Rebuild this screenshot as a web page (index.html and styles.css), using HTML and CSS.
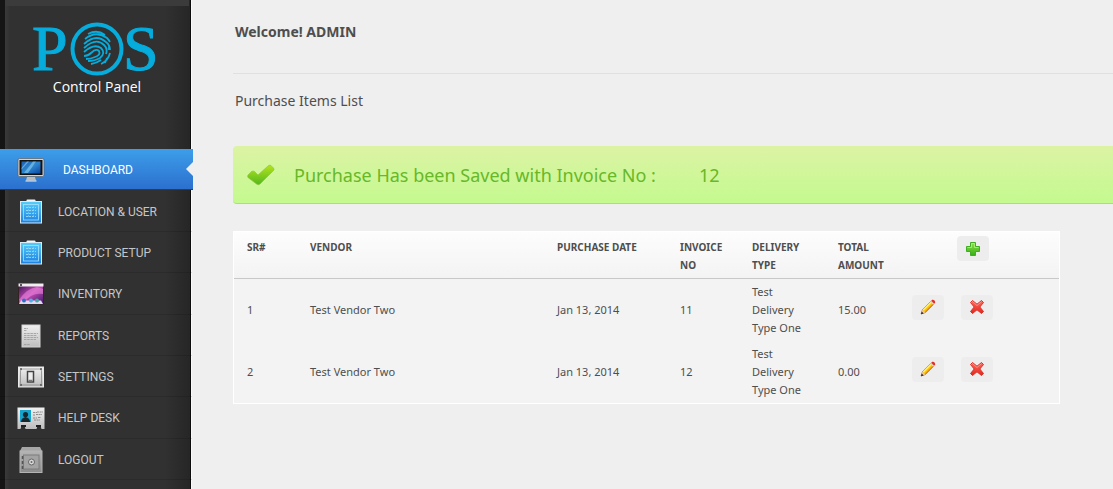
FILE: index.html
```html
<!DOCTYPE html>
<html lang="en">
<head>
<meta charset="utf-8">
<title>POS Control Panel</title>
<link rel="stylesheet" href="styles.css">
</head>
<body>
<svg class="defs" width="0" height="0" aria-hidden="true">
  <defs>
    <linearGradient id="blue" x1="0" y1="0" x2="0" y2="1"><stop offset="0" stop-color="#55cdfb"/><stop offset="1" stop-color="#1c7fe2"/></linearGradient>
    <linearGradient id="screen" x1="0" y1="0" x2="1" y2="1"><stop offset="0" stop-color="#1d5fb0"/><stop offset=".5" stop-color="#2f86d0"/><stop offset="1" stop-color="#0b46a4"/></linearGradient>
    <linearGradient id="metal" x1="0" y1="0" x2="0" y2="1"><stop offset="0" stop-color="#f1f1f1"/><stop offset="1" stop-color="#bdbdbd"/></linearGradient>
    <linearGradient id="safe" x1="0" y1="0" x2="0" y2="1"><stop offset="0" stop-color="#b5b5b5"/><stop offset="1" stop-color="#8b8b8b"/></linearGradient>
    <linearGradient id="space" x1="0" y1="0" x2="1" y2="1"><stop offset="0" stop-color="#35104f"/><stop offset=".5" stop-color="#c24bb5"/><stop offset="1" stop-color="#3b1769"/></linearGradient>
    <linearGradient id="leaf" x1="0" y1="0" x2="0" y2="1"><stop offset="0" stop-color="#b4e31e"/><stop offset="1" stop-color="#53b81c"/></linearGradient>
    <linearGradient id="red" x1="0" y1="0" x2="0" y2="1"><stop offset="0" stop-color="#ff6a5c"/><stop offset="1" stop-color="#e3261b"/></linearGradient>
    <linearGradient id="green" x1="0" y1="0" x2="0" y2="1"><stop offset="0" stop-color="#8fe04a"/><stop offset="1" stop-color="#35b014"/></linearGradient>
    <symbol id="i-plan" viewBox="0 0 28 26">
      <rect x="9.500" y=".5" width="9" height="3" rx="1" fill="#f4f4f4"/>
      <rect x="3.500" y="2.500" width="21" height="21.500" fill="url(#blue)" stroke="#d8eaf4"/>
      <rect x="6.500" y="5.500" width="15" height="15.500" fill="none" stroke="#a5e4ff" stroke-width=".8"/>
      <path d="M9 8.500h10M9 11.500h10M9 14.500h10M9 17.500h10" stroke="#a9e2fb" stroke-width=".8" stroke-dasharray="2 1"/>
      <path d="M11.500 7v12M16.500 7v12" stroke="#7fd0f6" stroke-width=".6" stroke-dasharray="2 1"/>
    </symbol>
    <symbol id="i-edit" viewBox="0 0 16 16">
      <path d="M1 15l1.500-4.500L11 2l3 3-8.500 8.500z" fill="#f9c80e" stroke="#a8741a" stroke-width=".7"/>
      <path d="M3.300 11L11 3.300" stroke="#fff07a" stroke-width="1.500"/><path d="M5.300 12.800l7.700-7.700" stroke="#e78a12" stroke-width="1.200"/>
      <path d="M1 15l1.400-4.200 2.900 2.800z" fill="#eec59a"/><path d="M1 15.200l.7-2.600 1.900 1.800z" fill="#3b1c10"/>
      <path d="M10.200 2.800l1-1 3 3-1 1z" fill="#d9d9e2"/><path d="M11.200 1.800l1-1q1.200-.5 2.300.6t.6 2.400l-.9 1z" fill="#ea2b24"/>
    </symbol>
    <symbol id="i-delete" viewBox="0 0 16 16">
      <path d="M1.500 3.500l2-2L8 5.200l4.500-3.700 2 2L10.800 8l3.700 4.500-2 2L8 10.800l-4.500 3.700-2-2L5.200 8z" fill="url(#red)" stroke="#d8302a" stroke-linejoin="round"/>
      <path d="M2.500 3.500l1-1L8 6.500l4.500-4" fill="none" stroke="#ff9a90" stroke-width=".9"/>
    </symbol>
    <symbol id="i-add" viewBox="0 0 16 16">
      <path d="M5.500 1.500h5v4h4v5h-4v4h-5v-4h-4v-5h4z" fill="url(#green)" stroke="#3fae22"/>
      <path d="M6.500 6.500v-4h3v4h4" fill="none" stroke="#b6f07c" stroke-width=".8"/><path d="M2.500 6.500h4" stroke="#b6f07c" stroke-width=".8"/>
    </symbol>
  </defs>
</svg>
<div class="app">
  <aside class="sidebar">
    <div class="brand">
      <svg class="logo" viewBox="0 0 132 56" role="img" aria-label="POS">
        <text class="logo-letter" x="1" y="49">P</text>
        <text class="logo-letter" x="92" y="49">S</text>
        <circle class="logo-ring" cx="66" cy="28" r="24.500"/>
        <g class="logo-print">
          <path d="M57 13q9-5 17 1M54 18q11-9 22-1 2 2 3 4M53 23q12-11 22-2 4 3 4 8M53 27q12-11 20-3 4 4 2 9M53 31q10-9 17-4 5 5-1 10-5 3-12 3M53 35q4 0 7-3 5-5 8-2 2 4-4 6-4 2-9 2M79 32q-2 8-9 11M60 43q6-1 10-4M78 25v4M76 37l-2 5"/>
        </g>
      </svg>
      <div class="brand-name">Control Panel</div>
    </div>
    <nav class="nav" aria-label="Main">
      <a class="nav-item active" href="#"><svg class="nav-icon" viewBox="0 0 28 26"><path d="M10 20h8l1 3.500h-10z" fill="#bbb"/><path d="M8.500 24h11" stroke="#eee"/><rect x="1" y="1.500" width="26" height="18" rx="1.500" fill="#d4d4d4" stroke="#5b6063" stroke-width=".7"/><rect x="2.500" y="3" width="23" height="15" fill="#111"/><rect x="4.500" y="4.500" width="19" height="12" fill="url(#screen)"/><path d="M7 16L16 4.500h3L11 16zM4.500 11L10 4.500h2l-7.500 8z" fill="#8bd1ef" opacity=".6"/></svg><span>DASHBOARD</span></a>
      <a class="nav-item" href="#"><svg class="nav-icon"><use href="#i-plan"/></svg><span>LOCATION &amp; USER</span></a>
      <a class="nav-item" href="#"><svg class="nav-icon"><use href="#i-plan"/></svg><span>PRODUCT SETUP</span></a>
      <a class="nav-item" href="#"><svg class="nav-icon" viewBox="0 0 28 26"><rect x="1.500" y="3" width="25" height="20" fill="url(#space)" stroke="#322"/><path d="M2 19Q10 7 20 6l6 2v5Q15 11 6 22z" fill="#f08be0" opacity=".55"/><rect x="1.500" y="2.500" width="25" height="3" fill="#eee"/><path d="M3 4h2" stroke="#222" stroke-width="1.500"/><path d="M2 23l2-3.500h20l2 3.500z" fill="#ded9ec"/><circle cx="7" cy="19.500" r="2" fill="#2c6fc7"/><circle cx="14" cy="19.500" r="2" fill="#4ab4e6"/><circle cx="20" cy="19.500" r="2" fill="#48a5a8"/></svg><span>INVENTORY</span></a>
      <a class="nav-item" href="#"><svg class="nav-icon" viewBox="0 0 28 26"><rect x="5" y="2" width="18" height="22" fill="url(#metal)" stroke="#d5d5d5"/><path d="M7 5.500h4M7 7.500h3M7 10.500h14M7 12.500h13M7 14.500h14M7 16.500h12M7 21.500h6" stroke="#999" stroke-width=".8" stroke-dasharray="2.500 .7"/></svg><span>REPORTS</span></a>
      <a class="nav-item" href="#"><svg class="nav-icon" viewBox="0 0 28 26"><rect x="1.500" y="3" width="25" height="20" fill="url(#metal)" stroke="#e8e8e8"/><rect x="3.500" y="5" width="21" height="16" rx="2" fill="none" stroke="#8a8a8a" stroke-width=".8"/><path d="M3 5h2M23 5h2M3 21h2M23 21h2" stroke="#555" stroke-width="1.500"/><rect x="10.500" y="7.500" width="6" height="10.500" fill="#eee" stroke="#444" stroke-width="1.500"/><path d="M11.500 16.500h4" stroke="#777" stroke-width="1.500"/></svg><span>SETTINGS</span></a>
      <a class="nav-item" href="#"><svg class="nav-icon" viewBox="0 0 28 26"><path d="M.5 2.500h27v21.500h-3l-1-3h-3l-1 3h-11l-1-3h-3l-1 3h-3z" fill="url(#metal)"/><path d="M4 21h5M19 21h5" stroke="#222" stroke-width="2"/><rect x="3" y="5" width="11" height="12" fill="#14a3cc"/><circle cx="8.500" cy="9.500" r="2.600" fill="#17272e"/><path d="M4 17q0-4 4.500-5 4.500 1 4.500 5z" fill="#17272e"/><path d="M16 7.500h4M16 10h2M20 7h6M19 9.500h6M16 13h4M17 15h6M21 12.500h3" stroke="#777" stroke-width=".8" stroke-dasharray="2 .6"/></svg><span>HELP DESK</span></a>
      <a class="nav-item" href="#"><svg class="nav-icon" viewBox="0 0 28 26"><path d="M5 0h18l2 4H3z" fill="#a6a6a6"/><rect x="3" y="4" width="22" height="21.500" fill="url(#safe)" stroke="#b4b4b4"/><rect x="6.500" y="8" width="15.500" height="14" fill="#a3a3a3" stroke="#7c7c7c"/><circle cx="14.500" cy="15" r="3" fill="#d8d8d8" stroke="#666"/><circle cx="14.500" cy="15" r="1" fill="#666"/><path d="M5.500 9v3M5.500 14v3M5.500 19v3" stroke="#555" stroke-width="1.500"/></svg><span>LOGOUT</span></a>
    </nav>
  </aside>
  <main class="main">
    <p class="welcome">Welcome! ADMIN</p>
    <h1 class="title">Purchase Items List</h1>
    <div class="alert" role="status">
      <svg class="alert-icon" viewBox="0 0 28 24" aria-hidden="true"><path d="M1 12l3.500-3.500q1.500-1 3 0l3.500 3.500L21 3q1.500-1.500 3-.5l2.500 2.500q1 1.500 0 2.500L13 21q-1.500 1.500-3.500 0L1 14.500q-.8-1.200 0-2.500z" fill="url(#leaf)" stroke="#8fbf3a" stroke-width=".6"/></svg>
      <span>Purchase Has been Saved with Invoice No :</span>
      <span class="alert-number">12</span>
    </div>
    <table class="items">
      <colgroup><col class="c-sr"><col class="c-vendor"><col class="c-date"><col class="c-invoice"><col class="c-delivery"><col class="c-total"><col></colgroup>
      <thead>
        <tr><th>SR#</th><th>VENDOR</th><th>PURCHASE DATE</th><th>INVOICE NO</th><th>DELIVERY TYPE</th><th>TOTAL AMOUNT</th><th class="add-cell"><button class="icon-btn" type="button" aria-label="Add purchase"><svg><use href="#i-add"/></svg></button></th></tr>
      </thead>
      <tbody>
        <tr><td>1</td><td>Test Vendor Two</td><td>Jan 13, 2014</td><td>11</td><td>Test Delivery Type One</td><td>15.00</td><td><div class="actions"><button class="icon-btn" type="button" aria-label="Edit purchase 1"><svg><use href="#i-edit"/></svg></button><button class="icon-btn" type="button" aria-label="Delete purchase 1"><svg><use href="#i-delete"/></svg></button></div></td></tr>
        <tr><td>2</td><td>Test Vendor Two</td><td>Jan 13, 2014</td><td>12</td><td>Test Delivery Type One</td><td>0.00</td><td><div class="actions"><button class="icon-btn" type="button" aria-label="Edit purchase 2"><svg><use href="#i-edit"/></svg></button><button class="icon-btn" type="button" aria-label="Delete purchase 2"><svg><use href="#i-delete"/></svg></button></div></td></tr>
      </tbody>
    </table>
  </main>
</div>
</body>
</html>
```
FILE: styles.css
```css
* { box-sizing: border-box; }
body {
  margin: 0;
  background: #efefef;
  color: #4e4e4e;
  font-family: "Noto Sans", "Open Sans", sans-serif;
  font-size: 11px;
  line-height: 18px;
}
.defs { position: absolute; }
.app { display: flex; min-height: 100vh; }

.sidebar {
  flex: 0 0 192px;
  background: linear-gradient(90deg, #151515 5px, #3a3a3a 5px, #313131 10px, #313131 165px, #262626 190px, #0c0c0c 190px, #0c0c0c 191px, #fafafa 191px);
}
.brand {
  display: flex;
  flex-direction: column;
  align-items: center;
  height: 149px;
  margin-left: 5px;
  margin-right: 3px;
  padding-top: 15px;
  border-top: 6px solid #3b3b3b;
}
.logo { width: 132px; height: 56px; overflow: visible; }
.logo-letter {
  font-family: "Liberation Serif", serif;
  font-size: 64px;
  fill: #05acdc;
  stroke: #05acdc;
  stroke-width: 1px;
}
.logo-ring { fill: none; stroke: #05acdc; stroke-width: 4px; }
.logo-print { fill: none; stroke: #05acdc; stroke-width: 1.8px; }
.brand-name {
  color: #fff;
  font-family: "Open Sans", sans-serif;
  font-size: 14px;
  font-weight: 500;
  line-height: 20px;
}

.nav { display: grid; grid-auto-rows: 1fr; height: 331px; }
.nav-item {
  position: relative;
  display: flex;
  align-items: center;
  gap: 13px;
  padding-top: 2px;
  padding-left: 17px;
  color: #c6c6c6;
  font-family: Roboto, sans-serif;
  font-size: 12px;
  text-decoration: none;
  border-bottom: 1px solid rgba(0, 0, 0, .12);
}
.nav-icon { width: 28px; height: 26px; }
.nav-item.active {
  gap: 18px;
  margin-right: -1px;
  color: #fff;
  background: linear-gradient(#3d9eea, #2b70ce);
  border-bottom: 1px solid #173f7c;
}
.nav-item.active::after {
  content: "";
  position: absolute;
  right: 0;
  top: 13px;
  border: 7px solid transparent;
  border-right-color: #efefef;
  border-left: 0;
}

.main { flex: 1; min-width: 0; padding-left: 41px; }
.welcome {
  margin: 0;
  padding: 23px 2px 32px;
  font-size: 14px;
  font-weight: 700;
  border-bottom: 1px solid #e0e0e0;
}
.title {
  margin: 0;
  padding: 18px 2px 36px;
  font-size: 14px;
  font-weight: 400;
}
.alert {
  display: flex;
  align-items: center;
  height: 58px;
  padding: 0 14px;
  color: #68b828;
  font-size: 18px;
  background: linear-gradient(#dcf3a4, #c4fa8f);
  border-bottom: 1px solid #a9df7b;
  border-radius: 4px 0 0 4px;
}
.alert-icon { width: 28px; height: 24px; margin-right: 19px; }
.alert-number { margin-left: 43px; }

.items {
  width: 94%;
  margin-top: 27px;
  table-layout: fixed;
  border-collapse: separate;
  border-spacing: 0;
  background: #f3f3f3;
  border: 1px solid #fff;
}
.c-sr { width: 63px; }
.c-vendor { width: 247px; }
.c-date { width: 123px; }
.c-invoice { width: 72px; }
.c-delivery { width: 86px; }
.c-total { width: 74px; }
.items thead { background: linear-gradient(#fdfdfd, #f3f3f3); }
.items th, .items td { padding: 4px 13px; text-align: left; }
.items th {
  padding-top: 6px;
  padding-right: 0;
  font-size: 10px;
  vertical-align: top;
  border-bottom: 1px solid #c8c8c8;
}
.items td:nth-child(5) { padding-right: 18px; }
.items td:last-child { padding-bottom: 10px; }
.items .add-cell { padding: 4px 0 0 58px; }
.actions { display: flex; gap: 17px; }
.icon-btn {
  display: flex;
  align-items: center;
  justify-content: center;
  width: 32px;
  height: 25px;
  padding: 0;
  background: #ededed;
  border: 0;
  border-radius: 4px;
}
.icon-btn svg { width: 16px; height: 16px; }
```
